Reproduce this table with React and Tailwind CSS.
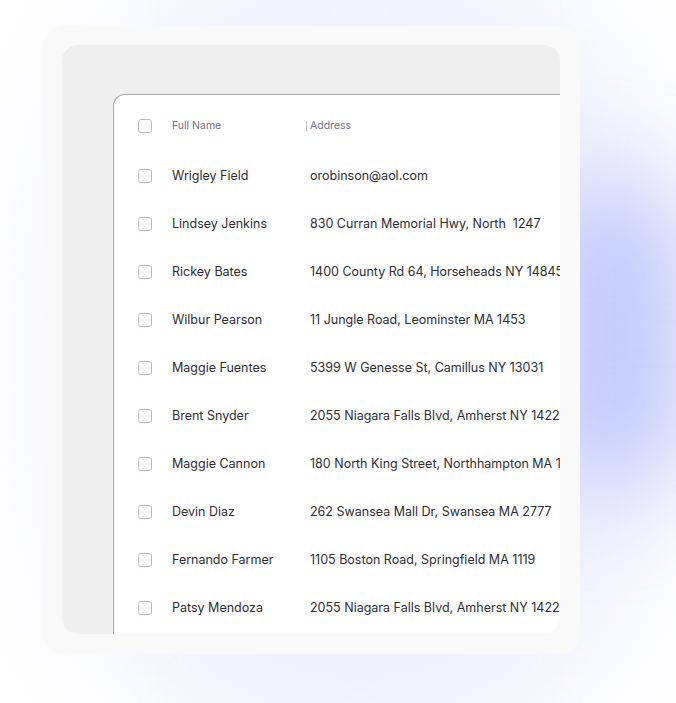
import React from "react";

const rows = [
  { name: "Wrigley Field", address: "orobinson@aol.com" },
  { name: "Lindsey Jenkins", address: "830 Curran Memorial Hwy, North  1247" },
  { name: "Rickey Bates", address: "1400 County Rd 64, Horseheads NY 14845" },
  { name: "Wilbur Pearson", address: "11 Jungle Road, Leominster MA 1453" },
  { name: "Maggie Fuentes", address: "5399 W Genesse St, Camillus NY 13031" },
  { name: "Brent Snyder", address: "2055 Niagara Falls Blvd, Amherst NY 14228" },
  { name: "Maggie Cannon", address: "180 North King Street, Northhampton MA 1060" },
  { name: "Devin Diaz", address: "262 Swansea Mall Dr, Swansea MA 2777" },
  { name: "Fernando Farmer", address: "1105 Boston Road, Springfield MA 1119" },
  { name: "Patsy Mendoza", address: "2055 Niagara Falls Blvd, Amherst NY 14228" },
];

const Checkbox = () => (
  <span className="block w-[14px] h-[14px] shrink-0 rounded-[3px] border border-[#b8bdc7] bg-white" />
);

const App = () => {
  return (
    <div
      className="relative w-[676px] h-[703px] overflow-hidden bg-white"
      style={{ fontFamily: "Inter, 'Liberation Sans', sans-serif" }}
    >
      {/* soft glows behind the panels */}
      <div className="absolute left-[60px] top-[-60px] w-[600px] h-[820px] rounded-full bg-[#eef0fd] blur-[70px]" />
      <div className="absolute left-[535px] top-[180px] w-[150px] h-[310px] rounded-full bg-[#bfc8fb] blur-[50px]" />

      <div className="relative pt-[26px] pl-[43px]">
        <div className="w-[537px] h-[628px] rounded-[20px] bg-[#f9f9fa] p-[19px]">
          <div className="w-[498px] h-[589px] rounded-2xl bg-[#efefef] overflow-hidden pt-[49px] pl-[51px]">
            <div className="w-[600px] h-full bg-white border-t border-l border-[#ababab] rounded-tl-xl pt-[4px]">
              <div className="flex items-center h-[53px] pl-[24px]">
                <Checkbox />
                <div className="ml-[20px] w-[134px] text-[10.5px] text-[#6f7390]">Full Name</div>
                <span className="w-px h-[10px] bg-[#c4c4c4]" />
                <div className="ml-[3px] text-[10.5px] text-[#6f7390]">Address</div>
              </div>
              {rows.map((row, i) => (
                <div key={i} className="flex items-center h-[48px] pl-[24px]">
                  <Checkbox />
                  <div className="ml-[20px] w-[138px] text-[12.5px] text-[#2e2e33] whitespace-pre">
                    {row.name}
                  </div>
                  <div className="text-[12.5px] text-[#2e2e33] whitespace-pre">{row.address}</div>
                </div>
              ))}
            </div>
          </div>
        </div>
      </div>
    </div>
  );
};

export default App;
